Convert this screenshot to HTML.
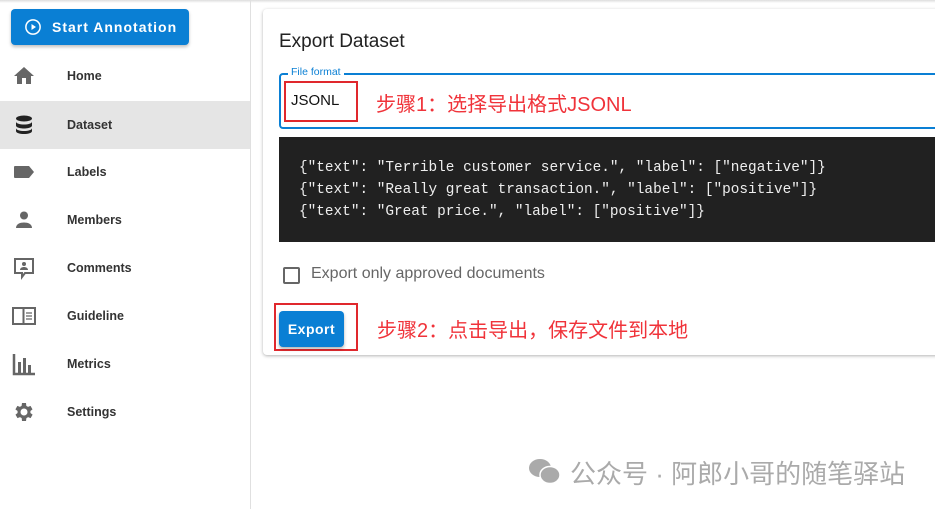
<!DOCTYPE html>
<html><head><meta charset="utf-8"><style>
*{box-sizing:border-box;margin:0;padding:0}
body{width:935px;height:509px;overflow:hidden;background:#fff;font-family:"Liberation Sans","Noto Sans CJK SC",sans-serif;position:relative}
.top{position:absolute;left:0;top:0;width:935px;height:3px;background:linear-gradient(#ddd,#fff)}
.side{position:absolute;left:0;top:0;width:251px;height:509px;border-right:1px solid #e0e0e0}
.btn{position:absolute;left:11px;top:9px;width:178px;height:36px;background:#0a7fd4;border-radius:4px;box-shadow:0 2px 3px rgba(0,0,0,.25);color:#fff;font-size:14px;font-weight:bold;letter-spacing:1px;display:flex;align-items:center;padding-left:13px}
.btn svg{margin-right:10px}
.nav{position:absolute;left:0;width:250px;height:48px;display:flex;align-items:center;font-size:12.5px;font-weight:bold;color:#333}
.nav svg{position:absolute;left:12px}
.nav span{position:absolute;left:67px}
.act{background:#e5e5e5}
.card{position:absolute;left:263px;top:9px;width:690px;height:346px;background:#fff;border-radius:4px;box-shadow:0 1px 3px rgba(0,0,0,.3)}
.abs{position:absolute}
.red{color:#f0333a;font-size:20px}
</style></head><body>
<div class="top"></div>
<div class="side">
<div class="btn"><svg width="18" height="18" viewBox="0 0 24 24"><circle cx="12" cy="12" r="9.5" fill="none" stroke="#fff" stroke-width="2"/><path d="M10 8l6 4-6 4z" fill="#fff"/></svg>Start Annotation</div>
<div class="nav" style="top:52px"><svg width="24" height="24" viewBox="0 0 24 24"><path d="M10 20v-6h4v6h5v-8h3L12 3 2 12h3v8z" fill="#666"/></svg><span>Home</span></div>
<div class="nav act" style="top:101px"><svg width="24" height="24" viewBox="0 0 24 24"><ellipse cx="12" cy="5.5" rx="8" ry="3" fill="#222"/><path d="M4 8.5c0 2 4 3 8 3s8-1 8-3v4c0 2-4 3-8 3s-8-1-8-3zM4 15c0 2 4 3 8 3s8-1 8-3v3c0 2-4 3-8 3s-8-1-8-3z" fill="#222"/></svg><span>Dataset</span></div>
<div class="nav" style="top:148px"><svg width="24" height="24" viewBox="0 0 24 24"><path d="M2 7a1 1 0 011-1h14l5 6-5 6H3a1 1 0 01-1-1z" fill="#666"/></svg><span>Labels</span></div>
<div class="nav" style="top:196px"><svg width="24" height="24" viewBox="0 0 24 24"><circle cx="12" cy="7.5" r="4" fill="#666"/><path d="M4 20c0-4 4-5.5 8-5.5s8 1.5 8 5.5z" fill="#666"/></svg><span>Members</span></div>
<div class="nav" style="top:244px"><svg width="24" height="24" viewBox="0 0 24 24"><path d="M3 3h18v14h-8l-3 4v-4H3z" fill="none" stroke="#666" stroke-width="2"/><circle cx="12" cy="8" r="2" fill="#666"/><path d="M8 14c0-2 2-3 4-3s4 1 4 3z" fill="#666"/></svg><span>Comments</span></div>
<div class="nav" style="top:292px"><svg width="24" height="24" viewBox="0 0 24 24"><rect x="1" y="4" width="22" height="16" fill="none" stroke="#666" stroke-width="2"/><path d="M11.5 4v16" stroke="#666" stroke-width="2"/><path d="M14 9h6M14 12h6M14 15h6" stroke="#666" stroke-width="1.3"/></svg><span>Guideline</span></div>
<div class="nav" style="top:340px"><svg width="24" height="24" viewBox="0 0 24 24"><path d="M2 2v20h21" fill="none" stroke="#666" stroke-width="2.5"/><rect x="6" y="10" width="3" height="11" fill="#666"/><rect x="11" y="6" width="3" height="15" fill="#666"/><rect x="16" y="13" width="3" height="8" fill="#666"/></svg><span>Metrics</span></div>
<div class="nav" style="top:388px"><svg width="24" height="24" viewBox="0 0 24 24"><path d="M19.4 13a7.6 7.6 0 000-2l2.1-1.6-2-3.5-2.5 1a7.4 7.4 0 00-1.7-1L15 3h-4l-.4 2.9a7.4 7.4 0 00-1.7 1l-2.5-1-2 3.5L6.6 11a7.6 7.6 0 000 2l-2.1 1.6 2 3.5 2.5-1a7.4 7.4 0 001.7 1L11 21h4l.4-2.9a7.4 7.4 0 001.7-1l2.5 1 2-3.5zM13 15.5a3.5 3.5 0 110-7 3.5 3.5 0 010 7z" fill="#666" transform="translate(-1 0)"/></svg><span>Settings</span></div>
</div>
<div class="card">
<div class="abs" style="left:16px;top:22px;font-size:19px;color:#222">Export Dataset</div>
<div class="abs" style="left:16px;top:64px;width:690px;height:56px;border:2px solid #0a7fd4;border-radius:4px"></div>
<div class="abs" style="left:25px;top:57px;background:#fff;padding:0 3px;font-size:10.5px;color:#0a7fd4">File format</div>
<div class="abs" style="left:21px;top:72px;width:74px;height:41px;border:2px solid #e0282d"></div>
<div class="abs" style="left:28px;top:83px;font-size:15px;color:#111">JSONL</div>
<div class="abs red" style="left:113px;top:79px">步骤1：选择导出格式JSONL</div>
<div class="abs" style="left:16px;top:128px;width:680px;height:105px;background:#212121;color:#eee;font-family:'Liberation Mono',monospace;font-size:14.4px;line-height:22px;padding:20px 0 0 20px;white-space:pre">{"text": "Terrible customer service.", "label": ["negative"]}
{"text": "Really great transaction.", "label": ["positive"]}
{"text": "Great price.", "label": ["positive"]}</div>
<div class="abs" style="left:20px;top:258px;width:17px;height:17px;border:2px solid #666;border-radius:2px"></div>
<div class="abs" style="left:48px;top:256px;font-size:16px;color:#666">Export only approved documents</div>
<div class="abs" style="left:11px;top:294px;width:84px;height:48px;border:2px solid #e0282d"></div>
<div class="abs" style="left:16px;top:302px;width:65px;height:36px;background:#0a7fd4;border-radius:4px;box-shadow:0 2px 3px rgba(0,0,0,.3);color:#fff;font-size:14px;font-weight:bold;letter-spacing:.5px;display:flex;align-items:center;justify-content:center">Export</div>
<div class="abs red" style="left:114px;top:305px">步骤2：点击导出，保存文件到本地</div>
</div>
<svg class="abs" style="left:527px;top:457px" width="36" height="30" viewBox="0 0 36 30"><ellipse cx="13" cy="11" rx="11" ry="9" fill="#aaa"/><ellipse cx="23" cy="18" rx="10" ry="8.5" fill="#aaa" stroke="#fff" stroke-width="1.5"/></svg>
<div class="abs" style="left:570px;top:454px;font-size:26px;color:#aaa">公众号 · 阿郎小哥的随笔驿站</div>
</body></html>
